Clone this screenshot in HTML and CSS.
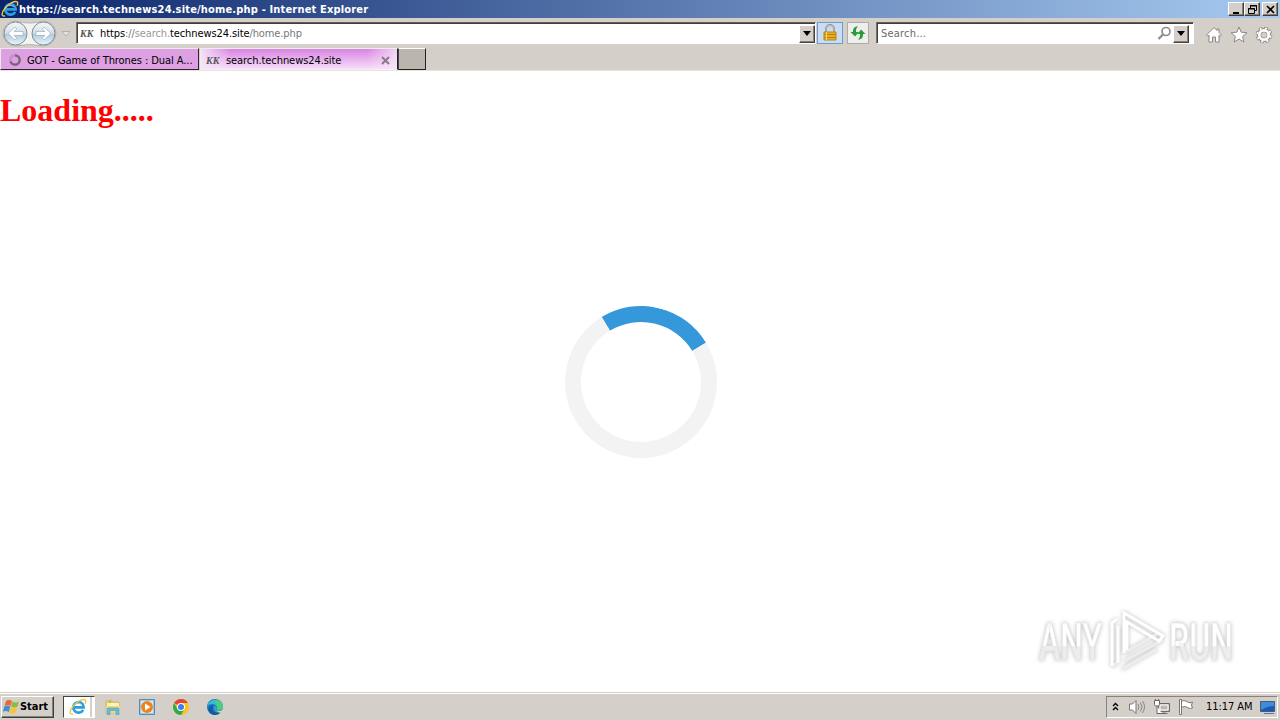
FILE: index.html
```
<!DOCTYPE html>
<html lang="en">
<head>
    <meta charset="UTF-8">
    <title>search.technews24.site</title>
    <link rel="stylesheet" href="styles.css">
</head>
<body>
    <svg class="defs" width="0" height="0">
        <defs>
            <linearGradient id="navFill" x1="0" y1="0" x2="0" y2="1"><stop offset="0" stop-color="#f4f7f9"/><stop offset=".48" stop-color="#d4dfe8"/><stop offset=".52" stop-color="#b0c9dc"/><stop offset="1" stop-color="#e6f7ff"/></linearGradient>
            <linearGradient id="edgeFill" x1="0" y1="0" x2="1" y2="1"><stop offset="0" stop-color="#176cba"/><stop offset=".55" stop-color="#1788ca"/><stop offset="1" stop-color="#53ce62"/></linearGradient>
            <linearGradient id="wmFill" x1="0" y1="0" x2="0" y2="1"><stop offset=".56" stop-color="#fff"/><stop offset=".57" stop-color="#ededed"/></linearGradient>
            <symbol id="ie" viewBox="0 0 18 18">
                <path d="M14.200 11.800A5.300 5.300 0 1 1 14.800 9.400H5" fill="none" stroke="#2d9fe0" stroke-width="2.600"/>
                <path d="M5 7.500A5 4.500 0 0 1 13 7" fill="none" stroke="#7dd2f7" stroke-width="1"/>
                <path d="M4 15.800C-.2 17 .3 12.800 4 8.200S14.300.2 16.200 2c.9.900.5 2.300-.2 3.700" fill="none" stroke="#f3c640" stroke-width="1.400"/>
            </symbol>
        </defs>
    </svg>

    <header class="title-bar">
        <svg class="title-icon" width="18" height="18"><use href="#ie"/></svg>
        <span class="title-text">https://search.technews24.site/home.php - Internet Explorer</span>
        <div class="window-buttons">
            <button class="win-btn"><svg width="11" height="11"><path d="M2 9h6" stroke="#000" stroke-width="2"/></svg></button>
            <button class="win-btn"><svg width="11" height="11" fill="none" stroke="#000"><path d="M3.500 4V1.500h6v5H7.500M3 2h7M1.500 4.500h6v5h-6zM1 5h7"/></svg></button>
            <button class="win-btn close"><svg width="11" height="11"><path d="M2 2l7 7M9 2l-7 7" stroke="#000" stroke-width="1.700"/></svg></button>
        </div>
    </header>

    <nav class="toolbar">
        <svg class="nav-arrows" width="75" height="30" viewBox="0 0 75 30">
            <path d="M15 3Q29 7 43 3A12.500 12.500 0 0 1 43 28Q29 25 15 28A12.500 12.500 0 0 1 15 3" fill="#f4f3f1" stroke="#b4b0ac"/>
            <circle cx="15" cy="15.500" r="11.500" fill="url(#navFill)" stroke="#7f8b94"/>
            <circle cx="43" cy="15.500" r="11.500" fill="url(#navFill)" stroke="#7f8b94"/>
            <path d="M7.500 15.500l7-6.500 1.800 1.900-2.800 2.600h9v4h-9l2.800 2.600-1.800 1.900z" fill="#fff" stroke="#9badb9" stroke-width=".7"/>
            <path d="M50.500 15.500l-7-6.500-1.800 1.900 2.800 2.600h-9v4h9l-2.800 2.600 1.800 1.900z" fill="#fff" stroke="#9badb9" stroke-width=".7"/>
            <path d="M61.500 13.500h8l-4 4.500z" fill="#e7e3de" stroke="#b4b0aa"/>
        </svg>
        <div class="field address">
            <span class="kk">KK</span>
            <span class="url">https<span class="dim">://</span><span class="faded">search.</span>technews24.site<span class="dim">/home.php</span></span>
            <button class="drop"><svg width="9" height="6"><path d="M0 0h8L4 5z"/></svg></button>
        </div>
        <button class="tool lock"><svg width="16" height="18" viewBox="0 0 16 18"><path d="M4 8V5a4 4 0 0 1 8 0v3" fill="none" stroke="#8d867c" stroke-width="2"/><path d="M4 8V5a4 4 0 0 1 8 0v3" fill="none" stroke="#d9d4c9" stroke-width=".8"/><path d="M2 8h12v8H2z" fill="#e9ae22" stroke="#b88218"/><path d="M2 10.500h12M2 13.500h12" stroke="#b77e14"/><path d="M4.500 8v8" stroke="#f9d776"/></svg></button>
        <button class="tool refresh"><svg width="16" height="16" viewBox="0 0 16 16"><path d="M8 1.500C3.500 1.500 3 4 3 7H.5L5 11.500 9 7H6C6 4.500 6 3.500 8 1.500" fill="#269d35"/><path d="M8 14.500c4.500 0 5-2.500 5-5.500h2.500L11 4.500 7.500 9H10c0 2.500 0 3.500-2 5.500" fill="#269d35"/></svg></button>
        <div class="field search">
            <span class="placeholder">Search...</span>
            <svg width="15" height="15" viewBox="0 0 15 15" fill="none" stroke="#8c8b91"><circle cx="9" cy="5.500" r="4" stroke-width="1.700"/><path d="M6 8.500L1.500 13" stroke-width="2.300"/></svg>
            <button class="drop"><svg width="9" height="6"><path d="M0 0h8L4 5z"/></svg></button>
        </div>
        <div class="commands">
            <svg width="18" height="18" viewBox="0 0 18 18"><path d="M9 1.500L1.500 9l1.300 1.300L4 9.200V16h3.500v-5h3v5H14V9.200l1.200 1.100L16.500 9 14 6.500V3h-2v1.500z" fill="#fff" stroke="#8b8784"/></svg>
            <svg width="18" height="18" viewBox="0 0 18 18"><path d="M9 1l2.200 5.200 5.700.5-4.300 3.800 1.300 5.500L9 13.100 4.100 16l1.300-5.500L1.100 6.700l5.700-.5z" fill="#fff" stroke="#8b8784"/></svg>
            <svg width="18" height="18" viewBox="0 0 18 18"><circle cx="9" cy="9" r="6.700" fill="none" stroke="#8b8784" stroke-width="3.200" stroke-dasharray="3.400 1.862"/><circle cx="9" cy="9" r="4.800" fill="none" stroke="#8b8784" stroke-width="4.500"/><circle cx="9" cy="9" r="6.700" fill="none" stroke="#fff" stroke-width="1.900" stroke-dasharray="2.100 3.162" stroke-dashoffset="-.65"/><circle cx="9" cy="9" r="4.700" fill="none" stroke="#fff" stroke-width="2.700"/><circle cx="9" cy="9" r="2.500" fill="#d5cfca"/></svg>
        </div>
    </nav>

    <div class="tabs">
        <div class="tab">
            <svg width="14" height="14" viewBox="0 0 14 14" fill="none"><circle cx="7" cy="7" r="4.700" stroke="#c292c8" stroke-width="2.500"/><path d="M7 2.300A4.700 4.700 0 1 1 2.500 8.500" stroke="#79667c" stroke-width="2.300"/></svg>
            <span class="tab-title first-title">GOT - Game of Thrones : Dual A...</span>
        </div>
        <div class="tab active">
            <span class="kk">KK</span>
            <span class="tab-title second-title">search.technews24.site</span>
            <svg class="tab-close" width="9" height="9"><path d="M1 1l7 7M8 1L1 8" stroke="#8b7790" stroke-width="2"/></svg>
        </div>
        <div class="new-tab"></div>
    </div>

    <main class="page">
        <h1>Loading.....</h1>
        <div class="loader"></div>
        <svg class="watermark" width="230" height="90" viewBox="0 0 230 90">
            <g class="wm-text">
                <text x="9" y="58" textLength="63" lengthAdjust="spacingAndGlyphs">ANY</text>
                <text x="139" y="58" textLength="64" lengthAdjust="spacingAndGlyphs">RUN</text>
            </g>
            <g class="wm-logo">
                <path class="lower" d="M82 64l5-3M94 51l33-19M94 59l39-21M92 67l35-20"/>
                <path d="M87 17l-5 4v43M88 24v37M94 51V11l39 23-4 5-32-19v28"/>
            </g>
        </svg>
    </main>

    <footer class="taskbar">
        <button class="start">
            <svg width="17" height="17" viewBox="0 0 17 17"><path d="M3 3q3-2 6 0L7.500 8q-3-2-6 0z" fill="#ee6635"/><path d="M9.500 3.500q3 2 6.500 0L14.500 8.500q-3 2-6.500 0z" fill="#8ebc3d"/><path d="M1.300 8.500q3-2 6 0L5.800 14q-3-2-6 0z" fill="#448ed4"/><path d="M7.700 9q3 2 6.500 0l-1.500 5.500q-3 2-6.500 0z" fill="#f5c438"/></svg>
            <span>Start</span>
        </button>
        <div class="task-active"><svg width="18" height="18"><use href="#ie"/></svg></div>
        <div class="launchers">
            <svg width="18" height="18" viewBox="0 0 18 18"><path d="M2 3l5-1 2 2h6v11H2z" fill="#e9ce71" stroke="#c8aa55" stroke-width=".6"/><path d="M3 5h12v4H3z" fill="#fff2b5"/><path d="M2 8h14v7H2z" fill="#f0d87b"/><path d="M3 16.500V11q0-1 1-1h10q1 0 1 1v5.500h-3v-4H6v4z" fill="#66bce1" stroke="#3e94bc" stroke-width=".5"/><path d="M5 4h2" stroke="#48a252"/></svg>
            <svg width="18" height="18" viewBox="0 0 18 18"><path d="M1.500 1.500h15v15h-15z" fill="#9bc8e9" stroke="#548cb9"/><path d="M3 3h12v12H3z" fill="#dbedf6"/><circle cx="9" cy="9" r="6" fill="#ef831b"/><path d="M7 5.500v7l5.500-3.500z" fill="#fff"/></svg>
            <svg width="18" height="18" viewBox="0 0 18 18"><circle cx="9" cy="9" r="8" fill="#fbc51c"/><path d="M9 9L2.100 5A8 8 0 0 1 16 5H9z" fill="#e94335"/><path d="M2.100 5A8 8 0 0 0 9 17l3.500-6L9 9 5.500 11z" fill="#31a853"/><circle cx="9" cy="9" r="4" fill="#fff"/><circle cx="9" cy="9" r="3" fill="#3d7ee8"/></svg>
            <svg width="18" height="18" viewBox="0 0 18 18"><circle cx="9" cy="9" r="8" fill="url(#edgeFill)"/><path d="M1 8C3 1 13-1 16.500 6c2 5-3 7-6 5 2-4-4-7-9.500-3" fill="#35bdd1"/><path d="M11 2c4 1 7 5 5.500 8-1.500 2-4 2-6 1 2-3 0-5-2-6z" fill="#51cd79"/><path d="M7.500 7c-3 6 2 9 7 7-4 6-13 2-12-3 .5-3 3-4 5-4" fill="#1459a5"/><path d="M9.500 8c-2 2 0 5 3 5 2 0 3.500-.5 4-1.500l1.500 1-2 2.500c-4 0-8-3-6.500-7" fill="#d5cfca"/></svg>
        </div>
        <div class="tray">
            <svg class="chevrons" width="7" height="10" fill="none" stroke="#000" stroke-width="1.400"><path d="M1 4l2.500-2.500L6 4M1 8l2.500-2.500L6 8"/></svg>
            <svg class="speaker" width="18" height="18" viewBox="0 0 18 18"><path d="M1.500 6h3L8 2.500v13L4.500 12h-3z" fill="#fff" stroke="#777"/><path d="M10 6q2 3 0 6M12.500 4.500q3 4.500 0 9M14.500 3q4 6 0 12" fill="none" stroke="#8b8784"/></svg>
            <svg width="18" height="18" viewBox="0 0 18 18"><path d="M5.500 5.500h11v8h-11zM7.500 15.500h7M11 14v2" fill="#bdb8b3" stroke="#6c6968"/><path d="M7 7h8v5H7z" fill="none" stroke="#fff"/><path d="M1.500 2.500h5v4l-1 1.500h-3l-1-1.500zM4 8v7.500h5M2.500 1v2M5.500 1v2" fill="#fff" stroke="#666"/></svg>
            <svg width="18" height="18" viewBox="0 0 18 18"><path d="M2.500 1.500h2v15h-2zM4.500 3c3-1 4 0 6 1 2 1 3 1 5 0l-1 3 1 3c-3 1-4 0-6-1-2-.5-3-.5-5 .5z" fill="#fff" stroke="#777"/></svg>
            <span class="clock">11:17 AM</span>
            <svg width="18" height="18" viewBox="0 0 18 18"><path d="M1.500 3.500h14v10h-14z" fill="#1859ba" stroke="#4d5b6e"/><path d="M2 4h13v4Q9 8 2 12z" fill="#418bdc"/><path d="M5 15.500h10" stroke="#59779d"/></svg>
        </div>
    </footer>
</body>
</html>
```
FILE: styles.css
```
* {
    box-sizing: border-box;
}

body {
    margin: 0;
    width: 1280px;
    height: 720px;
    display: flex;
    flex-direction: column;
    overflow: hidden;
    background: #fff;
    color: #000;
    font-family: "DejaVu Sans Condensed", "DejaVu Sans", sans-serif;
    font-size: 11px;
    font-stretch: condensed;
    letter-spacing: -0.07px;
}

svg {
    display: block;
    flex-shrink: 0;
}

.defs {
    position: absolute;
}

button {
    display: flex;
    align-items: center;
    justify-content: center;
    padding: 0;
    border: 1px solid;
    border-color: #fff #404040 #404040 #fff;
    background: #d5cfca;
    box-shadow: inset -1px -1px #858078;
    font: inherit;
}

.title-bar {
    height: 18px;
    flex-shrink: 0;
    display: flex;
    align-items: center;
    padding: 0 2px 0 1px;
    background: linear-gradient(90deg, #0a246a, #a6caf0);
    color: #fff;
}

.title-text {
    font-weight: bold;
    white-space: nowrap;
    letter-spacing: 0.17px;
}

.window-buttons {
    display: flex;
    margin-left: auto;
}

.win-btn {
    width: 16px;
    height: 14px;
}

.close {
    margin-left: 2px;
}

.toolbar {
    height: 30px;
    flex-shrink: 0;
    display: flex;
    align-items: flex-start;
    background: #d5cfca;
}

.nav-arrows {
    width: 76px;
}

.field {
    display: flex;
    align-items: center;
    height: 22px;
    margin-top: 4px;
    padding: 1px 0 0 2px;
    border: 1px solid;
    border-color: #625d57 #fff #fff #77736e;
    box-shadow: inset 1px 1px #403d3a;
    background: #fff;
}

.address {
    width: 740px;
}

.kk {
    width: 20px;
    padding-left: 1px;
    font: italic bold 10px "Liberation Serif", serif;
    letter-spacing: 0;
    color: #555;
}

.url {
    margin-left: 1px;
    letter-spacing: -0.1px;
}

.dim {
    color: #777;
}

.faded {
    color: #999;
}

.drop {
    width: 16px;
    height: 18px;
    margin-left: auto;
}

.tool {
    width: 26px;
    height: 22px;
    margin: 4px 0 0 1px;
    border: 1px solid #6b9dd2;
    background: #c9def5;
    box-shadow: none;
}

.refresh {
    width: 22px;
    margin-left: 4px;
    border-color: #b0aba6;
    background: #eeeeec;
}

.search {
    width: 318px;
    margin-left: 7px;
}

.placeholder {
    flex: 1;
    padding-left: 2px;
    color: #696969;
    letter-spacing: 0.2px;
}

.search .drop {
    margin: 0 4px 0 1px;
}

.commands {
    display: flex;
    gap: 7px;
    margin: 8px 0 0 11px;
}

.tabs {
    height: 23px;
    flex-shrink: 0;
    display: flex;
    background: #d5cfca;
    border-bottom: 1px solid #e7e3df;
}

.tab {
    width: 199px;
    height: 22px;
    display: flex;
    align-items: center;
    padding: 2px 7px 0 7px;
    border: 1px solid;
    border-color: #eee5ef #35202f #35202f #eee5ef;
    background: #dda0e3;
}

.active {
    margin-left: 1px;
    width: 198px;
    padding-left: 4px;
    border-color: #eee #222 #f7edf7 #eee;
    background:
        linear-gradient(90deg, rgba(248, 230, 250, 0.9), transparent 30px, transparent 166px, rgba(248, 230, 250, 0.8)),
        linear-gradient(#d983e2, #f6def8);
}

.tab-title {
    white-space: nowrap;
}

.first-title {
    margin-left: 5px;
}

.second-title {
    margin-left: 1px;
}

.tab-close {
    margin-left: auto;
}

.new-tab {
    width: 28px;
    height: 22px;
    border: 1px solid;
    border-color: #fff #222 #222 #444;
    background: #bbb5ae;
}

.page {
    position: relative;
    flex: 1;
    background: #fff;
}

h1 {
    margin: 0;
    padding-top: 21px;
    color: #f00;
    font: bold 32px/37px "Liberation Serif", serif;
    letter-spacing: 0;
}

.loader {
    width: 152px;
    height: 152px;
    margin: 177px 0 0 565px;
    border: 16px solid #f3f3f3;
    border-top-color: #3498db;
    border-radius: 50%;
    transform: rotate(13.8deg);
}

/* sits over the page corner */
.watermark {
    position: absolute;
    right: 20px;
    bottom: 0;
    filter: drop-shadow(0 0 2px #bbb);
}

.wm-text {
    fill: url(#wmFill);
    stroke: #e5e5e5;
    stroke-width: 0.7px;
    font: 500 51px Roboto, sans-serif;
    letter-spacing: 0;
}

.wm-logo {
    fill: none;
    stroke: #fff;
    stroke-width: 3px;
}

.lower {
    stroke: #ededed;
}

.taskbar {
    height: 28px;
    flex-shrink: 0;
    display: flex;
    align-items: center;
    padding: 0 2px 0 1px;
    background: #d5cfca;
    border-top: 1px solid #d5cfca;
    box-shadow: inset 0 1px #fff;
}

.start {
    width: 53px;
    height: 22px;
    justify-content: flex-start;
    padding-left: 1px;
    gap: 0;
    font-weight: bold;
    letter-spacing: -0.05px;
}

.task-active {
    width: 32px;
    height: 22px;
    display: flex;
    align-items: center;
    padding-left: 5px;
    margin-left: 9px;
    border: 1px solid;
    border-color: #444 #fff #fff #444;
    background: linear-gradient(90deg, #fff 26px, #d5cfca 26px, #d5cfca 28px, #fff 28px);
}

.launchers {
    display: flex;
    gap: 16px;
    margin-left: 9px;
}

.tray {
    width: 172px;
    height: 22px;
    display: flex;
    align-items: center;
    margin-left: auto;
    padding-left: 5px;
    gap: 6px;
    border: 1px solid;
    border-color: #88827c #fff #fff #88827c;
}

.speaker {
    margin: 0 1px 0 3px;
}

.clock {
    width: 47px;
    margin: 0 0 0 5px;
    white-space: nowrap;
}
```
